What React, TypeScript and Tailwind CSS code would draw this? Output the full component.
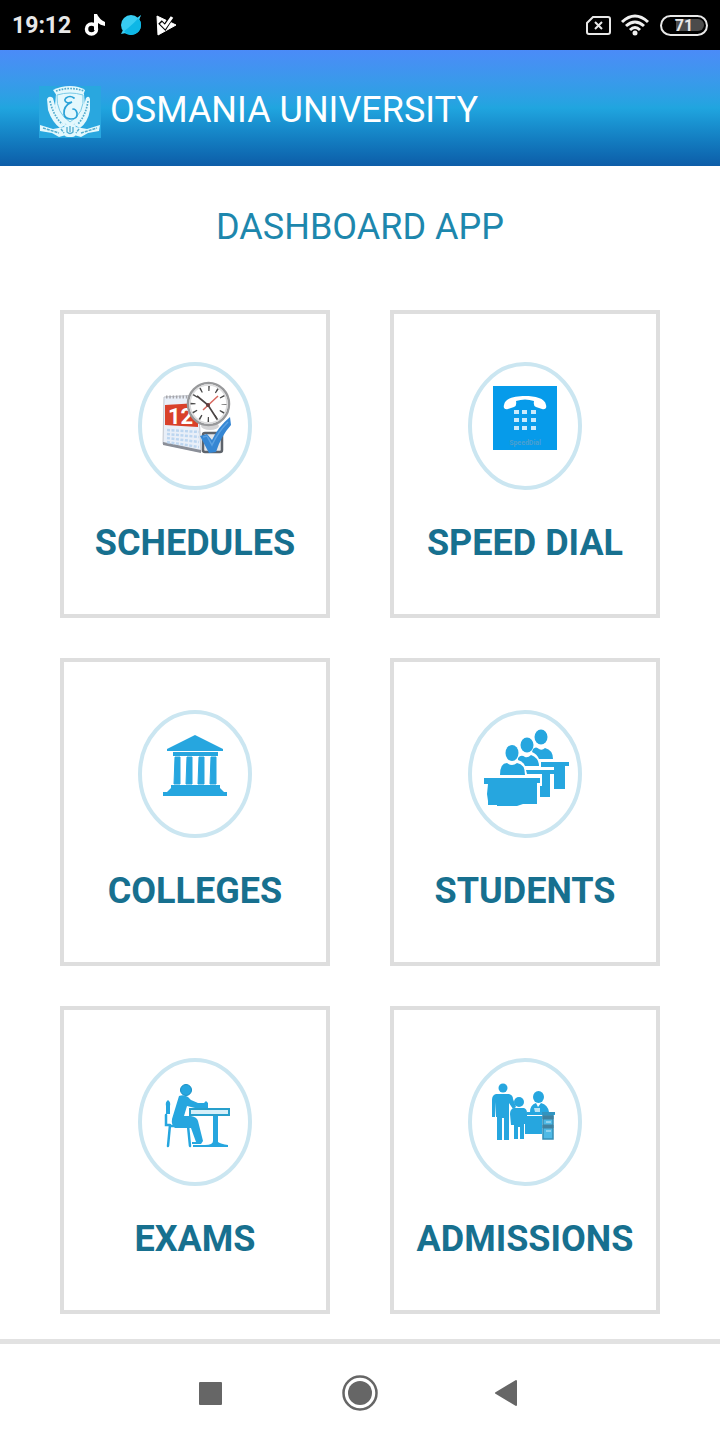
import type { ReactNode } from "react";

const BLUE = "#26a6df";

function SchedulesIcon() {
  return (
    <g>
      <path d="M34 42 L68 40 L71 97 L33 89Z" fill="#e9eff8" stroke="#c3c7cf" strokeWidth="1" />
      <path d="M33 87 L71 95 L71 98 L33 90Z" fill="#8b8f98" />
      <path d="M36 42H62" stroke="#a5a5aa" strokeWidth="3" strokeDasharray="1.5 1.8" />
      <path d="M35 50 L68 48 L68 72 L35 70Z" fill="#d9412b" />
      <text x="38" y="69" fontSize="22" fontWeight="700" fill="#fff" fontFamily="Roboto, sans-serif">12</text>
      <path d="M37 75L69 77M37 79L69 82M37 83L69 87M37 87L69 92" stroke="#bdd6f0" strokeWidth="2.5" strokeDasharray="3 1.5" />
      <ellipse cx="80" cy="71" rx="9" ry="4" fill="#d3d3d5" />
      <ellipse cx="78.500" cy="49" rx="20.500" ry="21" fill="#fff" stroke="#98999b" strokeWidth="2.500" />
      <ellipse cx="78.500" cy="49" rx="18.500" ry="19" fill="none" stroke="#dcdcdd" strokeWidth="1.500" />
      <circle cx="78.500" cy="49" r="15.500" fill="none" stroke="#4a4a4a" strokeWidth="5" strokeDasharray="1.4 6.716" strokeDashoffset="0.7" />
      <path d="M67 41L78 50L87 64" fill="none" stroke="#4b4545" strokeWidth="1.700" />
      <path d="M73 55L88 41" stroke="#d8675e" strokeWidth="1.500" />
      <circle cx="78" cy="50" r="2" fill="#633c3c" />
      <rect x="73" y="78" width="19" height="19" rx="2" fill="#e3e6ea" stroke="#5d636b" strokeWidth="2.500" />
      <path d="M70 81L77 79L82 85Q88 72 100 62L101 70Q91 81 86 97L79 98Z" fill="#3586d3" />
      <path d="M73 82L77 81L82 90Q88 77 98 67" fill="none" stroke="#5ba1e2" strokeWidth="1.500" />
    </g>
  );
}

function SpeedDialIcon() {
  return (
    <g>
      <rect x="33" y="31" width="64" height="64" fill="#069bea" />
      <path
        d="M44 50C45 43 55 41 65 41S85 43 86 50C87 53 85 55 82 54L76 52Q73 51 74 46Q65 43 56 46Q57 51 54 52L48 54C45 55 43 53 44 50Z"
        fill="#fff"
      />
      <g fill="#c9eafb">
        {[55, 63, 71].map((y) =>
          [54, 62, 71].map((x) => <rect key={`${x}-${y}`} x={x} y={y} width="5" height="4" />),
        )}
      </g>
      <text x="65" y="90" fontSize="7" textAnchor="middle" fill="#4b9fcf" fontFamily="Roboto, sans-serif">
        SpeedDial
      </text>
    </g>
  );
}

function CollegesIcon() {
  return (
    <g fill={BLUE}>
      <path d="M65 32L93 46V48H37V46Z" />
      <path d="M43 49H88V53H43Z" />
      <path d="M45 54H50V81H44ZM57 54H62V81H56ZM69 54H74V81H68ZM81 54H86V81H80Z" stroke={BLUE} strokeWidth="1" />
      <path d="M41 82H90V85L94 89H97V93H33V89H37L41 85Z" />
    </g>
  );
}

function StudentsIcon() {
  return (
    <g fill={BLUE}>
      <ellipse cx="81" cy="34" rx="6.500" ry="7.500" />
      <path d="M73 46Q76 43 79 46Q82 48 85 45Q93 47 93 56H79Q77 51 72 49Z" />
      <path d="M81 59H109V63H105V86H94V64H81Z" />
      <ellipse cx="67" cy="42" rx="6.500" ry="7.500" />
      <path d="M58 55Q61 51 65 54Q68 55 71 52Q79 55 79 63H65Q63 58 58 57Z" />
      <path d="M66 67H94V71H90V94H80V83H82V71H67Z" />
      <ellipse cx="52" cy="50" rx="6.500" ry="8" />
      <path d="M40 72Q40 60 47 60Q52 64 57 60Q65 61 65 72Z" />
      <path d="M24 75H80V80H77V101H63L57 103H37V102H28V98L27 91L28 81H24Z" />
    </g>
  );
}

function ExamsIcon() {
  return (
    <g fill={BLUE}>
      <circle cx="56" cy="39" r="5.500" stroke="#168fc5" strokeWidth="1" />
      <path d="M49 45Q54 43 58 46L61 49L68 52H74L76 50L78 52V57H65L57 55L54 65H61Q67 66 68 70L73 90L71 93H62V91H66L61 77H45Q41 74 42 68Z" />
      <path d="M38 49Q41 51 40 55V63H36V55Q35 51 38 49Z" />
      <path d="M36 64V74H40M40 74L38 95M40 75H58L60 95" fill="none" stroke={BLUE} strokeWidth="2.500" strokeLinecap="round" />
      <rect x="60" y="58" width="39" height="6" fill="#d5eff9" stroke="#289fcb" strokeWidth="2" />
      <path d="M83 65H88V91Q91 93 98 94V96H63V94H75Q83 94 83 90Z" />
    </g>
  );
}

function AdmissionsIcon() {
  return (
    <g fill={BLUE}>
      <ellipse cx="43" cy="37" rx="4.500" ry="4.500" />
      <path d="M36 43H49Q53 44 53 48L56 56L53 58L49 52V89H44V67H42V89H37V66H36V51L35 66H32V49Q32 44 36 43Z" />
      <circle cx="59" cy="51" r="5" />
      <path d="M54 57H64Q67 58 67 62V73H64V88H60V76H58V88H54V74H51L50 63Q50 58 54 57Z" />
      <ellipse cx="78.500" cy="46" rx="5.500" ry="6" />
      <path d="M70 61Q70 54 76 52L78 56L81 52Q88 54 89 61Z" />
      <path d="M74 57H80V61H75Z" fill="#b9e4f5" />
      <path d="M67 61H95V64H67ZM65 65H82V83H65Z" />
      <rect x="83" y="64" width="10" height="24" fill="#4fb9e5" stroke="#358fb6" strokeWidth="1.500" />
      <path d="M83 65H93V68H83ZM83 74H93V77H83ZM82 62H95" fill="#40819f" stroke="#40819f" strokeWidth="1" />
      <path d="M86 71H91M86 80H91" stroke="#cdebf7" strokeWidth="1" />
    </g>
  );
}

function Emblem() {
  return (
    <svg viewBox="0 0 62 52" className="w-[62px] shrink-0" role="img" aria-label="Osmania University emblem">
      <rect width="62" height="52" fill="#29a7df" />
      <g fill="#e3f8fd">
        <path d="M14 4Q22 0 31 0T46 4L44 10H18Z" />
        <path d="M17 8H45L46 20Q44 34 31 41Q18 34 16 20Z" />
        <path d="M8 13Q10 9 14 12L17 23L27 39L21 42Q13 36 9 24Z" />
        <path d="M51 13Q50 9 47 12L44 23L35 39L41 42Q49 36 51 24Z" />
        <path d="M1 39L14 43L25 41L27 49L20 51L13 47L1 45Z" />
        <path d="M61 39L48 43L37 41L35 49L42 51L49 47L60 45Z" />
        <rect x="25" y="38" width="12" height="13" rx="4" />
      </g>
      <path d="M18 9Q31 5 44 9Q46 27 31 36Q17 27 18 9Z" fill="none" stroke="#79cbe7" strokeWidth="1" />
      <path d="M11 15Q14 29 23 38M49 15Q47 29 39 38M17 5Q31 0 45 5" fill="none" stroke="#52abcd" strokeWidth="1.700" strokeDasharray="1.7 1.2" />
      <path d="M35 12Q31 9 27 12Q24 15 29 17L33 16Q24 20 25 28Q26 33 32 33Q39 33 38 27Q37 23 34 23" fill="none" stroke="#2aa2d7" strokeWidth="1.700" strokeLinecap="round" />
      <path d="M4 42L20 47M42 47L58 42M22 43L25 47M40 43L37 47" stroke="#52abcd" strokeWidth="1.500" strokeDasharray="3 1" />
      <path d="M28 41V46Q31 49 34 46V41M31 40V46" fill="none" stroke="#4eaacf" strokeWidth="1.300" />
    </svg>
  );
}

const tiles: { label: string; icon: ReactNode }[] = [
  { label: "SCHEDULES", icon: <SchedulesIcon /> },
  { label: "SPEED DIAL", icon: <SpeedDialIcon /> },
  { label: "COLLEGES", icon: <CollegesIcon /> },
  { label: "STUDENTS", icon: <StudentsIcon /> },
  { label: "EXAMS", icon: <ExamsIcon /> },
  { label: "ADMISSIONS", icon: <AdmissionsIcon /> },
];

function StatusBar() {
  return (
    <div className="flex h-[50px] items-center justify-between bg-black px-3 text-[#e8e8e8]">
      <div className="flex items-center gap-3">
        <span className="pt-0.5 text-[23px] font-bold">19:12</span>
        <svg viewBox="0 0 24 24" className="size-6" aria-hidden="true">
          <circle cx="8.500" cy="16" r="5" fill="none" stroke="#fff" strokeWidth="3.500" />
          <path d="M11 1H14Q16 6 22 9V13Q17 12 15 10V17H11Z" fill="#fff" />
        </svg>
        <svg viewBox="0 0 24 24" className="size-6" aria-hidden="true">
          <circle cx="12" cy="12" r="10" fill="#38cdf2" />
          <path d="M22 2Q16 10 4 19Q9 23 15 21.500Q22 19 22 12Q22 8 20 6Z" fill="#0eb7e6" />
          <path d="M18 5L22 2L20 7ZM4 17L2 21L7 20Z" fill="#38cdf2" />
        </svg>
        <svg viewBox="0 0 24 24" className="size-6" aria-hidden="true">
          <path d="M2 3L21 12L3 22Z" fill="#fff" stroke="#fff" strokeWidth="1" strokeLinejoin="round" />
          <path d="M5 9L10 14L17 3" fill="none" stroke="#000" strokeWidth="5" />
          <path d="M6 10L10 14L17 4" fill="none" stroke="#fff" strokeWidth="3" />
        </svg>
      </div>
      <div className="flex items-center gap-2">
        <svg viewBox="0 0 28 24" className="w-7" fill="none" stroke="#e8e8e8" strokeWidth="2" aria-hidden="true">
          <path d="M9 4H24Q26 4 26 6V19Q26 21 24 21H5Q3 21 3 19V10Z" />
          <path d="M11 9L18 16M18 9L11 16" />
        </svg>
        <svg viewBox="0 0 32 24" className="w-8" fill="none" stroke="#f0f0f0" strokeWidth="3" aria-hidden="true">
          <path d="M2 9Q15 -3 28 9M6 13Q15 5 24 13M10 17Q15 12 20 17" />
          <circle cx="15" cy="20" r="2.500" fill="#f0f0f0" stroke="none" />
        </svg>
        <div className="flex h-[21px] w-12 items-center justify-center rounded-full border-2 border-[#e8e8e8] p-0.5">
          <span className="flex h-3 w-full items-center justify-center rounded-full bg-linear-to-r from-black from-30% to-[#4b4b4b] to-30% pt-px text-base leading-3 font-bold">
            71
          </span>
        </div>
      </div>
    </div>
  );
}

export default function App() {
  return (
    <div className="flex min-h-screen flex-col bg-white font-[Roboto,sans-serif]">
      <StatusBar />
      <header className="flex h-[116px] items-center gap-[9px] bg-linear-to-b from-[#4b8bf8] via-[#20a5df] to-[#0d5da8] pt-1 pl-[39px] text-white">
        <div className="pt-1">
          <Emblem />
        </div>
        <h1 className="text-4xl">OSMANIA UNIVERSITY</h1>
      </header>
      <main className="flex-1 pb-[25px]">
        <h2 className="pt-[41px] pb-[63px] text-center text-4xl text-[#1d87ad]">DASHBOARD APP</h2>
        <div className="grid grid-cols-2 gap-x-[60px] gap-y-10 px-[60px]">
          {tiles.map(({ label, icon }) => (
            <button
              key={label}
              type="button"
              className="flex cursor-pointer flex-col items-center gap-[33px] border-4 border-[#dedede] pt-12 pb-[51px] text-4xl font-bold text-[#17708f]"
            >
              <svg viewBox="8 7 114 128" className="w-[114px]" aria-hidden="true">
                <ellipse cx="65" cy="71" rx="55" ry="62" fill="#fff" stroke="#cbe6f1" strokeWidth="4" />
                {icon}
              </svg>
              <span>{label}</span>
            </button>
          ))}
        </div>
      </main>
      <nav aria-label="System navigation" className="grid h-[101px] grid-cols-[1fr_36px_1fr] items-center border-t-[5px] border-[#e2e2e2] pt-px">
        <button type="button" aria-label="Recent apps" className="mr-[120px] cursor-pointer justify-self-end">
          <svg viewBox="0 0 24 24" className="size-6">
            <rect x="1" y="1" width="23" height="23" rx="1" fill="#666" />
          </svg>
        </button>
        <button type="button" aria-label="Home" className="cursor-pointer">
          <svg viewBox="0 0 36 36" className="size-9">
            <circle cx="18" cy="18" r="16.500" fill="none" stroke="#666" strokeWidth="2.500" />
            <circle cx="18" cy="18" r="12" fill="#666" />
          </svg>
        </button>
        <button type="button" aria-label="Back" className="ml-[116px] cursor-pointer justify-self-start">
          <svg viewBox="0 0 24 28" className="w-6">
            <path d="M22 2V26L2 14Z" fill="#666" stroke="#666" strokeWidth="2" strokeLinejoin="round" />
          </svg>
        </button>
      </nav>
    </div>
  );
}
